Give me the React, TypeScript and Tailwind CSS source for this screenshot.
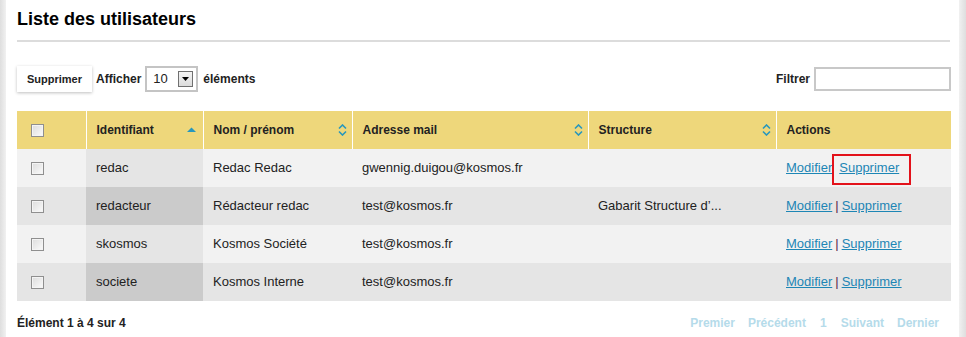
const users = [
  { id: 'redac', name: 'Redac Redac', mail: 'gwennig.duigou@kosmos.fr', structure: '', boxed: true },
  { id: 'redacteur', name: 'Rédacteur redac', mail: 'test@kosmos.fr', structure: 'Gabarit Structure d\u2019...', boxed: false },
  { id: 'skosmos', name: 'Kosmos Société', mail: 'test@kosmos.fr', structure: '', boxed: false },
  { id: 'societe', name: 'Kosmos Interne', mail: 'test@kosmos.fr', structure: '', boxed: false },
];

const Checkbox = () => (
  <span className="block w-[13px] h-[13px] border border-[#8f8f8f] bg-gradient-to-br from-[#dcdcdc] to-[#fbfbfb] shadow-[inset_0_0_0_1px_#f4f4f4]" />
);

const SortBoth = () => (
  <svg width="9" height="12" viewBox="0 0 9 12" className="text-[#2797bd]">
    <path d="M1 4.5 L4.5 1 L8 4.5" fill="none" stroke="currentColor" strokeWidth="1.6" />
    <path d="M1 7.5 L4.5 11 L8 7.5" fill="none" stroke="currentColor" strokeWidth="1.6" />
  </svg>
);

const SortUp = () => (
  <svg width="9" height="6" viewBox="0 0 9 6" className="text-[#2797bd]">
    <path d="M0 5 L4.5 0.5 L9 5 Z" fill="currentColor" />
  </svg>
);

const App = () => {
  return (
    <div className="w-[966px] h-[337px] flex bg-[#e8e8e8] font-['Liberation_Sans',Arial,sans-serif] text-[#222]">
      <div className="w-[6px] bg-gradient-to-r from-[#dedede] to-[#f1f1f1]" />
      <div className="flex-1 bg-white pl-[11px] pr-[8px]">
        <h1 className="text-[18px] font-bold text-black pt-[7px] h-[40px] leading-[24px]">
          Liste des utilisateurs
        </h1>
        <div className="h-[2px] bg-[#dcdcdc] mr-[1px]" />

        <div className="flex items-center justify-between mt-[24px] h-[26px]">
          <div className="flex items-center">
            <button className="h-[26px] px-[10px] bg-white text-[11px] font-bold shadow-[0_1px_3px_rgba(0,0,0,0.25)]">
              Supprimer
            </button>
            <span className="ml-[4px] text-[12px] font-bold">Afficher</span>
            <div className="ml-[4px] w-[53px] h-[26px] border-2 border-[#c4c4c4] flex items-center justify-between pl-[6px] pr-[3px]">
              <span className="text-[13px]">10</span>
              <span className="w-[15px] h-[16px] border border-[#707070] bg-gradient-to-b from-[#f4f4f4] to-[#dcdcdc] flex items-center justify-center">
                <svg width="7" height="4" viewBox="0 0 7 4">
                  <path d="M0 0 H7 L3.5 4 Z" fill="#000" />
                </svg>
              </span>
            </div>
            <span className="ml-[5px] text-[12px] font-bold">éléments</span>
          </div>
          <div className="flex items-center">
            <span className="text-[12px] font-bold mr-[4px]">Filtrer</span>
            <input className="w-[137px] h-[24px] border-2 border-[#c8c8c8] outline-none" />
          </div>
        </div>

        <table className="mt-[19px] w-[934px] border-collapse text-[13px] table-fixed">
          <colgroup>
            <col className="w-[69px]" />
            <col className="w-[117px]" />
            <col className="w-[149px]" />
            <col className="w-[236px]" />
            <col className="w-[188px]" />
            <col className="w-[175px]" />
          </colgroup>
          <thead>
            <tr className="h-[38px] bg-[#eed77b] text-[12px] font-bold text-left">
              <th className="pl-[14px] border-r border-white"><Checkbox /></th>
              <th className="pl-[10px] pr-[7px] border-r border-white">
                <div className="flex items-center justify-between">Identifiant<SortUp /></div>
              </th>
              <th className="pl-[10px] pr-[5px] border-r border-white">
                <div className="flex items-center justify-between">Nom / prénom<SortBoth /></div>
              </th>
              <th className="pl-[10px] pr-[5px] border-r border-white">
                <div className="flex items-center justify-between">Adresse mail<SortBoth /></div>
              </th>
              <th className="pl-[10px] pr-[5px] border-r border-white">
                <div className="flex items-center justify-between">Structure<SortBoth /></div>
              </th>
              <th className="pl-[10px]">Actions</th>
            </tr>
          </thead>
          <tbody>
            {users.map((u, i) => (
              <tr key={u.id} className={`h-[38px] ${i % 2 === 0 ? 'bg-[#f2f2f2]' : 'bg-[#e5e5e5]'}`}>
                <td className="pl-[14px]"><Checkbox /></td>
                <td className={`pl-[10px] ${i % 2 === 0 ? 'bg-[#e5e5e5]' : 'bg-[#cbcbcb]'}`}>{u.id}</td>
                <td className="pl-[10px]">{u.name}</td>
                <td className="pl-[10px]">{u.mail}</td>
                <td className="pl-[10px] whitespace-nowrap overflow-hidden">{u.structure}</td>
                <td className="pl-[10px] whitespace-nowrap">
                  <a className="text-[#1d86b5] underline">Modifier</a>
                  {u.boxed ? (
                    <span className="relative ml-[7px]">
                      <a className="text-[#1d86b5] underline">Supprimer</a>
                      <span className="absolute left-[-7px] right-[-12px] top-[-6px] bottom-[-10px] border-2 border-[#e3121b]" />
                    </span>
                  ) : (
                    <>
                      <span className="text-[#5b1a4a] mx-[3px]">|</span>
                      <a className="text-[#1d86b5] underline">Supprimer</a>
                    </>
                  )}
                </td>
              </tr>
            ))}
          </tbody>
        </table>

        <div className="flex items-center justify-between mt-[13px] text-[12px] font-bold pr-[12px]">
          <span>Élément 1 à 4 sur 4</span>
          <div className="flex gap-[13px] text-[#b5dbea]">
            <span>Premier</span>
            <span>Précédent</span>
            <span className="mx-[1px]">1</span>
            <span>Suivant</span>
            <span>Dernier</span>
          </div>
        </div>
      </div>
      <div className="w-[7px] bg-gradient-to-r from-[#f1f1f1] to-[#dedede]" />
    </div>
  );
};

export default App;
